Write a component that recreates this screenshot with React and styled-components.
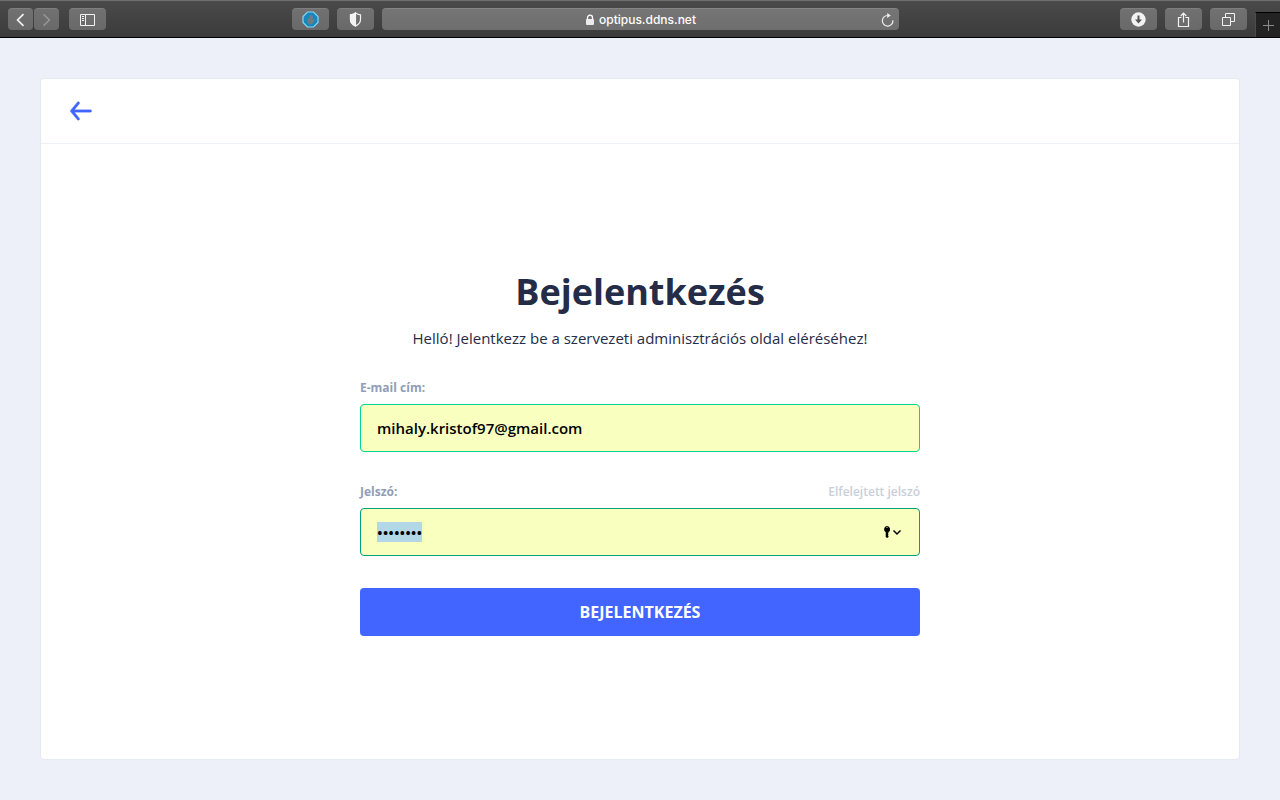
import React, { useEffect, useRef } from "react";
import styled, { createGlobalStyle } from "styled-components";

const GlobalStyle = createGlobalStyle`
  *, *::before, *::after { box-sizing: border-box; }
  body {
    margin: 0;
    background: #edf0f8;
    color: #242c47;
    font-family: "Open Sans", "Noto Sans", sans-serif;
    font-size: 15px;
    line-height: 20px;
  }
  button, input { font-family: inherit; }
`;

const Page = styled.div`
  display: flex;
  flex-direction: column;
  min-height: 100vh;
`;

const Toolbar = styled.header`
  display: grid;
  grid-template-columns: 1fr minmax(0, 518px) 1fr;
  height: 38px;
  border-top: 1px solid #6e6e6e;
  border-bottom: 1px solid #000;
  background: linear-gradient(#4a4a4a, #3b3b3b);
`;

const ToolSide = styled.div`
  display: flex;
  align-items: flex-start;
  justify-content: ${(p) => p.$align};
  padding: 7px ${(p) => (p.$flush ? "0" : "7px")} 0 8px;
`;

const ToolGroup = styled.div`
  display: flex;
  gap: ${(p) => p.$gap};
`;

const ToolButton = styled.button`
  display: flex;
  align-items: center;
  justify-content: center;
  width: ${(p) => (p.$narrow ? "25px" : "37px")};
  height: 22px;
  padding: 0;
  border: 0;
  border-top: 1px solid #7e7e7e;
  border-radius: 4px;
  background: linear-gradient(#717171, #696969);
  color: ${(p) => (p.disabled ? "#979797" : "#f2f2f2")};
`;

const AddressBar = styled.div`
  display: grid;
  grid-template-columns: 24px 1fr 24px;
  align-items: center;
  height: 22px;
  margin: 7px 0 0 1px;
  border-top: 1px solid #848484;
  border-radius: 4px;
  background: linear-gradient(#757575, #6e6e6e);
  color: #fff;
`;

const Address = styled.span`
  display: flex;
  grid-column: 2;
  align-items: center;
  justify-content: center;
  gap: 4px;
  font: 500 12px/20px Inter, "Liberation Sans", sans-serif;
`;

const ReloadButton = styled.button`
  display: flex;
  align-items: center;
  justify-content: center;
  padding: 0;
  border: 0;
  background: none;
  color: #ededed;
`;

const NewTabButton = styled.button`
  display: flex;
  align-items: center;
  justify-content: center;
  align-self: flex-end;
  width: 25px;
  height: 25px;
  margin-left: 8px;
  padding: 0;
  border: 0;
  border-top: 1px solid #000;
  border-left: 1px solid #4c4c4c;
  background: #232323;
  color: #8b8b8b;
`;

const Content = styled.main`
  display: flex;
  flex: 1;
  padding: 40px;
`;

const Card = styled.section`
  display: flex;
  flex: 1;
  flex-direction: column;
  border: 1px solid #e4e9f2;
  border-radius: 4px;
  background: #fff;
`;

const CardHeader = styled.nav`
  display: flex;
  align-items: center;
  height: 65px;
  padding: 0 24px;
  border-bottom: 1px solid #edf1f7;
`;

const BackLink = styled.a`
  display: flex;
  color: #4265ff;
`;

const CardBody = styled.div`
  display: flex;
  flex: 1;
  align-items: center;
  justify-content: center;
  padding: 24px;
`;

const AuthForm = styled.form`
  width: 100%;
  max-width: 560px;
`;

const Title = styled.h1`
  margin: 0 0 12px;
  font-size: 36px;
  font-weight: 700;
  line-height: 48px;
  text-align: center;
`;

const Subtitle = styled.p`
  margin: 0 0 32px;
  text-align: center;
`;

const Field = styled.div`
  margin-bottom: 32px;
`;

const FieldTop = styled.div`
  display: flex;
  justify-content: space-between;
  margin-bottom: 8px;
  font-size: 12px;
  line-height: 16px;
`;

const Label = styled.label`
  color: #929db6;
  font-weight: 700;
`;

const ForgotLink = styled.a`
  color: #c9ceda;
  font-weight: 600;
  text-decoration: none;
`;

const InputBox = styled.div`
  display: flex;
  align-items: center;
  height: 48px;
  padding: 0 16px;
  border: 1px solid ${(p) => (p.$focused ? "#00a074" : "#00d68f")};
  border-radius: 4px;
  background: #f9ffbf;
`;

const TextInput = styled.input`
  flex: 1;
  min-width: 0;
  padding: 0;
  border: 0;
  outline: 0;
  background: none;
  color: #000;
  caret-color: transparent;
  font-size: 15px;
  font-weight: 600;
  line-height: 20px;
  &::selection {
    background: rgba(178, 215, 232, 0.99);
    color: #000;
  }
`;

const KeyButton = styled.button`
  display: flex;
  align-items: center;
  padding: 0;
  border: 0;
  background: none;
  color: #000;
`;

const SubmitButton = styled.button`
  display: block;
  width: 100%;
  height: 48px;
  padding: 0;
  border: 0;
  border-radius: 4px;
  background: #4265ff;
  color: #fff;
  font-size: 16px;
  font-weight: 700;
  line-height: 20px;
  text-transform: uppercase;
`;

const Icon = ({ w, h, sw = 1, children }) => (
  <svg width={w} height={h} viewBox={`0 0 ${w} ${h}`} fill="none" stroke="currentColor" strokeWidth={sw} aria-hidden="true">
    {children}
  </svg>
);

function BrowserToolbar() {
  return (
    <Toolbar>
      <ToolSide $align="space-between">
        <ToolGroup $gap="10px">
          <ToolGroup $gap="1px">
            <ToolButton $narrow aria-label="Vissza">
              <Icon w={9} h={14} sw={1.7}><path d="M7.500 1.200 1.600 7l5.900 5.800" /></Icon>
            </ToolButton>
            <ToolButton $narrow disabled aria-label="Előre">
              <Icon w={9} h={14} sw={1.5}><path d="M1.500 1.200 7.400 7l-5.900 5.800" /></Icon>
            </ToolButton>
          </ToolGroup>
          <ToolButton aria-label="Oldalsáv">
            <Icon w={15} h={12}><path d="M.5.5h14v11H.5zM5.500.5v11M2 2.500h2M2 4.500h2M2 6.500h2" /></Icon>
          </ToolButton>
        </ToolGroup>
        <ToolGroup $gap="8px">
          <ToolButton aria-label="Hirdetésblokkoló">
            <Icon w={17} h={17}>
              <path d="M5.500 1h6L16 5.500v6L11.500 16h-6L1 11.500v-6z" fill="#1687bd" stroke="#86d6f6" strokeWidth="1.200" />
              <path d="M5.500 7.500v2.800c0 2 1.300 3.200 3 3.200 1.500 0 2.500-.9 3-2.400l1.200-2.600c-.8-.5-1.400 0-1.900.9V5c0-.8-.9-.8-1 0V4c-.1-.8-1-.8-1.100 0v.7c-.1-.8-1-.8-1.100 0v2.600c-.3-.8-1.100-.6-1.100.2z" fill="#737b80" stroke="none" />
            </Icon>
          </ToolButton>
          <ToolButton aria-label="Adatvédelmi jelentés">
            <Icon w={13} h={15} sw={1.2}>
              <path d="M6.500 1c1.500 1 3.200 1.600 5 1.800v4.700c0 3-2.200 5.200-5 6.500-2.800-1.300-5-3.500-5-6.500V2.800C3.300 2.600 5 2 6.500 1z" />
              <path d="M6.500 1v13c-2.800-1.300-5-3.500-5-6.500V2.800C3.300 2.600 5 2 6.500 1z" fill="currentColor" />
            </Icon>
          </ToolButton>
        </ToolGroup>
      </ToolSide>
      <AddressBar>
        <Address>
          <Icon w={10} h={12} sw={1.3}>
            <rect x="1" y="5" width="8" height="6" rx="1" fill="#ebebeb" stroke="none" />
            <path d="M2.500 5.500V3.700a2.500 2.500 0 0 1 5 0v1.800" />
          </Icon>
          optipus.ddns.net
        </Address>
        <ReloadButton aria-label="Újratöltés">
          <Icon w={13} h={14} sw={1.2}>
            <path d="M11.900 7.200A5.300 5.300 0 1 1 6.600 2.500" />
            <path d="M6.200 0v5l3.600-2.500z" fill="currentColor" stroke="none" />
          </Icon>
        </ReloadButton>
      </AddressBar>
      <ToolSide $align="flex-end" $flush>
        <ToolGroup $gap="8px">
          <ToolButton aria-label="Letöltések">
            <Icon w={15} h={15}>
              <circle cx="7.500" cy="7.500" r="7.200" fill="currentColor" stroke="none" />
              <path d="M7.500 3.500v6" stroke="#555" strokeWidth="2" />
              <path d="M4 7.500h7l-3.500 4z" fill="#555" stroke="none" />
            </Icon>
          </ToolButton>
          <ToolButton aria-label="Megosztás">
            <Icon w={13} h={16} sw={1.2}>
              <path d="M4.500 5.500h-3v9h10v-9h-3M6.500 10.500v-9M3.700 4l2.800-2.900L9.300 4" />
            </Icon>
          </ToolButton>
          <ToolButton aria-label="Lapok áttekintése">
            <Icon w={13} h={13}>
              <path d="M.5 4.500h8v8h-8zM3.500 4.500V.5h9v8h-4" />
            </Icon>
          </ToolButton>
        </ToolGroup>
        <NewTabButton aria-label="Új lap">
          <Icon w={11} h={11}><path d="M5.500 0v11M0 5.500h11" /></Icon>
        </NewTabButton>
      </ToolSide>
    </Toolbar>
  );
}

export default function App() {
  const passwordRef = useRef(null);

  useEffect(() => {
    passwordRef.current.focus();
    passwordRef.current.select();
  }, []);

  return (
    <>
      <GlobalStyle />
      <Page>
        <BrowserToolbar />
        <Content>
          <Card>
            <CardHeader>
              <BackLink href="#" aria-label="Vissza">
                <svg width="32" height="32" viewBox="0 0 24 24" fill="currentColor" stroke="currentColor" strokeWidth=".2" aria-hidden="true">
                  <path d="M19 11H7.140l3.630-4.360a1 1 0 1 0-1.540-1.280l-5 6a1.190 1.190 0 0 0-.09.150c0 .05 0 .08-.07.130A1 1 0 0 0 4 12a1 1 0 0 0 .07.360c0 .05 0 .08.07.130a1.190 1.190 0 0 0 .09.150l5 6A1 1 0 0 0 10 19a1 1 0 0 0 .64-.23 1 1 0 0 0 .13-1.410L7.140 13H19a1 1 0 0 0 0-2z" />
                </svg>
              </BackLink>
            </CardHeader>
            <CardBody>
              <AuthForm onSubmit={(e) => e.preventDefault()}>
                <Title>Bejelentkezés</Title>
                <Subtitle>Helló! Jelentkezz be a szervezeti adminisztrációs oldal eléréséhez!</Subtitle>
                <Field>
                  <FieldTop>
                    <Label htmlFor="email">E-mail cím:</Label>
                  </FieldTop>
                  <InputBox>
                    <TextInput id="email" type="email" defaultValue="mihaly.kristof97@gmail.com" />
                  </InputBox>
                </Field>
                <Field>
                  <FieldTop>
                    <Label htmlFor="password">Jelszó:</Label>
                    <ForgotLink href="#">Elfelejtett jelszó</ForgotLink>
                  </FieldTop>
                  <InputBox $focused>
                    <TextInput id="password" ref={passwordRef} type="password" defaultValue="password" />
                    <KeyButton type="button" aria-label="Mentett jelszavak">
                      <Icon w={20} h={14}>
                        <path d="M4 1a3.300 3.300 0 0 1 1.500 6.100v.9l-.6.800.6.800-.6.800.6.700v.8L4.200 13 2.700 12V7.100A3.300 3.300 0 0 1 4 1z" fill="currentColor" stroke="none" />
                        <circle cx="4" cy="2.500" r=".6" fill="#f9ffbf" stroke="none" />
                        <path d="m10.500 5.500 3.500 3.500 3.500-3.500" strokeWidth="1.500" />
                      </Icon>
                    </KeyButton>
                  </InputBox>
                </Field>
                <SubmitButton type="submit">Bejelentkezés</SubmitButton>
              </AuthForm>
            </CardBody>
          </Card>
        </Content>
      </Page>
    </>
  );
}
